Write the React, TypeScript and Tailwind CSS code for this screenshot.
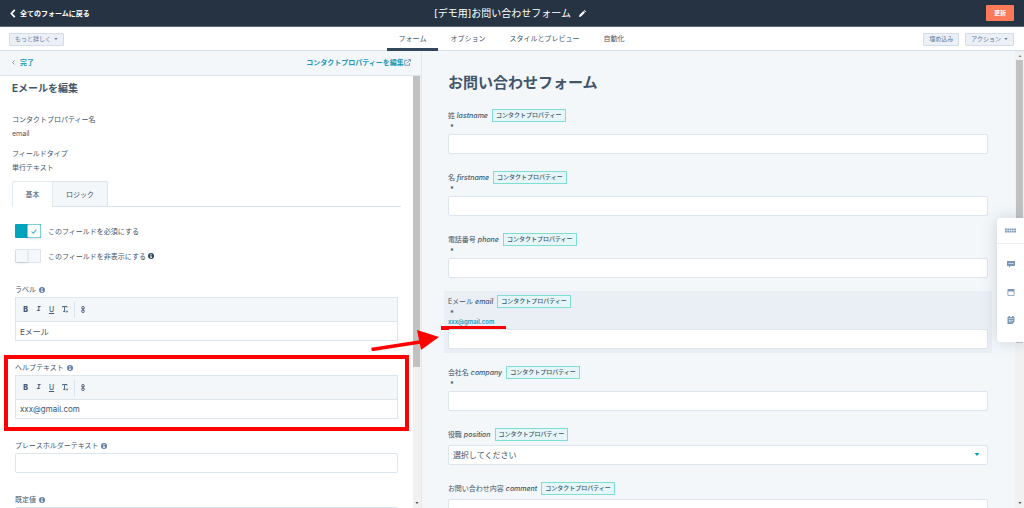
import type { ReactNode } from "react";

function InfoIcon({ className = "" }: { className?: string }) {
  return (
    <svg viewBox="0 0 12 12" className={`size-[6px] shrink-0 ${className}`} aria-hidden="true">
      <circle cx="6" cy="6" r="6" fill="currentColor" />
      <path d="M5 2h2v2H5zM4.400 5H7v3.600h.8V10H4.300V8.600H5V6.300h-.6z" fill="#fff" />
    </svg>
  );
}

function Caret({ className = "" }: { className?: string }) {
  return (
    <svg viewBox="0 0 8 5" className={className} aria-hidden="true">
      <path d="M0 0h8L4 5z" fill="currentColor" />
    </svg>
  );
}

function Chevron({ className = "" }: { className?: string }) {
  return (
    <svg viewBox="0 0 6 10" className={className} fill="none" stroke="currentColor" strokeWidth="2" aria-hidden="true">
      <path d="M5 1 1.200 5 5 9" />
    </svg>
  );
}

function SmallButton({ children }: { children: ReactNode }) {
  return (
    <button
      type="button"
      className="flex h-[13px] items-center gap-[3px] rounded-[1px] border border-[#d3deea] bg-[#eaf0f6] px-[5px] text-[6px] leading-none text-[#63799a]"
    >
      {children}
    </button>
  );
}

const tabs = ["フォーム", "オプション", "スタイルとプレビュー", "自動化"];

function Header() {
  return (
    <header className="grid h-[27px] shrink-0 grid-cols-[1fr_auto_1fr] items-center border-b border-[#5b6b7b] bg-[#253342] px-[10px] text-white">
      <a href="#forms" className="flex items-center gap-[4px] text-[7px] font-bold leading-none">
        <Chevron className="h-[9px] w-[6px]" />
        全てのフォームに戻る
      </a>
      <div className="flex items-center gap-[8px] pr-[4px]">
        <h1 className="text-[10px] leading-none">[デモ用]お問い合わせフォーム</h1>
        <button type="button" aria-label="名前を編集">
          <svg viewBox="0 0 12 12" className="size-[7px]" fill="currentColor" aria-hidden="true">
            <path d="M8.200 1.100 9.300 0 12 2.700l-1.100 1.100zM7.400 1.900l2.700 2.700L3.400 11.300 0 12l.7-3.400z" />
          </svg>
        </button>
      </div>
      <button
        type="button"
        className="flex h-[16px] w-[28px] items-center justify-center justify-self-end rounded-[1px] bg-[#ff7a59] text-[6px] font-bold leading-none"
      >
        更新
      </button>
    </header>
  );
}

function NavBar() {
  return (
    <div className="grid h-[24px] shrink-0 grid-cols-[1fr_auto_1fr] items-center border-b border-[#d3e0eb] bg-white pr-[10px] pl-[9px]">
      <div className="flex">
        <SmallButton>
          もっと詳しく
          <Caret className="h-[2px] w-[4px]" />
        </SmallButton>
      </div>
      <nav className="flex h-[24px]">
        {tabs.map((tab, i) => (
          <a
            key={tab}
            href={`#tab-${i}`}
            className={`flex items-center border-b-[3px] px-[12px] pt-[2px] text-[7px] leading-none ${
              i === 0 ? "border-[#33475b]" : "border-transparent"
            }`}
          >
            {tab}
          </a>
        ))}
      </nav>
      <div className="flex justify-end gap-[6px]">
        <SmallButton>埋め込み</SmallButton>
        <SmallButton>
          アクション
          <Caret className="h-[2px] w-[4px]" />
        </SmallButton>
      </div>
    </div>
  );
}

function Toggle({ id, checked, label, info }: { id: string; checked?: boolean; label: string; info?: boolean }) {
  return (
    <label htmlFor={id} className="relative ml-[3px] flex h-[14px] items-center text-[7px] leading-none">
      <input id={id} type="checkbox" defaultChecked={checked} className="peer sr-only" />
      {checked ? (
        <span className="flex h-[14px] w-[26px] justify-end rounded-[1px] bg-[#00a4bd]">
          <span className="flex w-[14px] items-center justify-center rounded-[2px] border border-[#7fd1de] bg-white shadow-sm">
            <svg viewBox="0 0 10 8" className="h-[5px] w-[6px]" fill="none" stroke="#33b6ca" strokeWidth="1.800" aria-hidden="true">
              <path d="m1 4 2.800 3L9 1" />
            </svg>
          </span>
        </span>
      ) : (
        <span className="flex h-[14px] w-[26px] rounded-[1px] border border-[#dfe6ee] bg-[#f5f8fa]">
          <span className="w-[12px] rounded-[1px] border-r border-[#dfe6ee] bg-[#f5f8fa] shadow-sm" />
        </span>
      )}
      <span className="ml-[7px]">{label}</span>
      {info && <InfoIcon className="ml-[2px] text-[#33475b]" />}
    </label>
  );
}

function Toolbar() {
  const btn = "flex w-[13px] items-center justify-center text-[7px] leading-none text-[#425b76]";
  return (
    <div className="flex h-[24px] items-center border-b border-[#dde5ed] bg-[#f3f7fa] pl-[3px]">
      <button type="button" aria-label="太字" className={`${btn} font-black`}>B</button>
      <button type="button" aria-label="斜体" className={`${btn} font-['Liberation_Mono',monospace] font-bold italic`}>I</button>
      <button type="button" aria-label="下線" className={`${btn} font-medium underline`}>U</button>
      <button type="button" aria-label="書式をクリア" className={btn}>
        <svg viewBox="0 0 12 14" className="h-[7px] w-[6px]" fill="none" stroke="currentColor" strokeWidth="1.800" aria-hidden="true">
          <path d="M1 3V1h9v2M5.500 1 4.500 11M2.500 11h4M8 9l4 4M12 9l-4 4" />
        </svg>
      </button>
      <span className="mr-[1px] ml-[3px] h-[16px] w-px bg-[#dbe3eb]" />
      <button type="button" aria-label="リンク" className={btn}>
        <svg viewBox="0 0 8 14" className="h-[7px] w-[4px]" fill="none" stroke="currentColor" strokeWidth="1.800" aria-hidden="true">
          <path d="M1.500 5V2.500Q1.500 1 4 1t2.500 1.500V5Q6.500 6 4 6T1.500 5zM1.500 9v2.500Q1.500 13 4 13t2.500-1.500V9Q6.500 8 4 8T1.500 9zM4 4v6" />
        </svg>
      </button>
    </div>
  );
}

function FieldLabel({ id, children }: { id: string; children: ReactNode }) {
  return (
    <label htmlFor={id} className="flex h-[15px] items-center gap-[3px] text-[7px] leading-none">
      {children}
      <InfoIcon className="text-[#6583a8]" />
    </label>
  );
}

function RichField({ id, label, value }: { id: string; label: string; value: string }) {
  return (
    <>
      <FieldLabel id={id}>{label}</FieldLabel>
      <div className="h-[44px] border border-[#dde5ed] bg-white">
        <Toolbar />
        <input id={id} defaultValue={value} className="block h-[18px] w-full px-[4px] text-[8px] outline-none" />
      </div>
    </>
  );
}

function EditorPanel() {
  return (
    <section className="flex w-[41.2%] shrink-0 flex-col border-r border-[#e3e9f0] bg-white">
      <div className="flex h-[25px] shrink-0 items-center justify-between border-b border-[#dbe5ee] bg-[#f3f7fa] pr-[10px] pl-[12px] pb-[2px] text-[7px] font-bold leading-none text-[#2499b3]">
        <a href="#done" className="flex items-center gap-[5px]">
          <Chevron className="h-[5px] w-[3px] text-[#7c98b6]" />
          完了
        </a>
        <a href="#property" className="flex items-center">
          コンタクトプロパティーを編集
          <svg viewBox="0 0 14 14" className="size-[7px] text-[#6583a8]" fill="none" stroke="currentColor" strokeWidth="1.600" aria-hidden="true">
            <path d="M7 2.500H1.500v10h9.500V8M5.500 8.500 12.500 1.500M8.500 1H13v4.500" />
          </svg>
        </a>
      </div>
      <div className="flex min-h-0 flex-1">
        <div className="min-w-0 flex-1 overflow-hidden pt-[6px] pr-[12px] pl-[12px]">
          <h2 className="text-[10px] font-bold leading-[12px]">Eメールを編集</h2>
          <dl className="mt-[19px] text-[7px] leading-[14px]">
            <dt>コンタクトプロパティー名</dt>
            <dd>email</dd>
            <dt className="mt-[6px]">フィールドタイプ</dt>
            <dd>単行テキスト</dd>
          </dl>
          <div role="tablist" className="mt-[6px] flex h-[26px] border-b border-[#dbe3ec] text-[7px] leading-none">
            <button type="button" role="tab" aria-selected="true" className="-mb-px w-[41px] rounded-tl-[2px] border border-b-0 border-[#e3e9f0] bg-white">
              基本
            </button>
            <button type="button" role="tab" aria-selected="false" className="w-[55px] rounded-tr-[2px] border-t border-r border-[#dbe3ec] bg-[#f3f7fa]">
              ロジック
            </button>
          </div>
          <div className="mt-[17px] flex flex-col gap-[11px]">
            <Toggle id="required" checked label="このフィールドを必須にする" />
            <Toggle id="hidden" label="このフィールドを非表示にする" info />
          </div>
          <div className="mt-[19px] mr-[3px] ml-[3px] flex flex-col gap-[19px]">
            <div>
              <RichField id="label" label="ラベル" value="Eメール" />
            </div>
            <div className="relative">
              <RichField id="help" label="ヘルプテキスト" value="xxx@gmail.com" />
              <div className="pointer-events-none absolute -inset-x-[11px] -top-[5px] -bottom-[12px] border-4 border-[#fe0000]" />
            </div>
            <div>
              <FieldLabel id="placeholder">プレースホルダーテキスト</FieldLabel>
              <input id="placeholder" className="block h-[20px] w-full rounded-[2px] border border-[#dde5ed] px-[4px] text-[8px]" />
            </div>
            <div>
              <FieldLabel id="default">既定値</FieldLabel>
              <input id="default" className="block h-[20px] w-full rounded-[2px] border border-[#dde5ed] px-[4px] text-[8px]" />
            </div>
          </div>
        </div>
        <div className="flex w-[8px] shrink-0 flex-col items-center justify-between bg-[#f1f1f1] pb-[4px]">
          <div className="h-[68%] w-[7px] bg-[#c1c1c1]" />
          <Caret className="h-[2px] w-[4px] text-[#505050]" />
        </div>
      </div>
    </section>
  );
}

type Field = { label: string; name: string; required?: boolean; help?: string; options?: string[] };

const fields: Field[] = [
  { label: "姓", name: "lastname", required: true },
  { label: "名", name: "firstname", required: true },
  { label: "電話番号", name: "phone", required: true },
  { label: "Eメール", name: "email", required: true, help: "xxx@gmail.com" },
  { label: "会社名", name: "company", required: true },
  { label: "役職", name: "position", options: ["選択してください"] },
  { label: "お問い合わせ内容", name: "comment" },
];

function PreviewField({ field }: { field: Field }) {
  const control = "block h-[20px] w-full rounded-[2px] border border-[#dde5ee] bg-white px-[4px] text-[8px]";
  return (
    <div className={`mb-[9px] p-[4px] ${field.help ? "bg-[#eaeff6]" : ""}`}>
      <div className="flex h-[13px] items-center text-[7px] leading-none">
        <label htmlFor={field.name} className="whitespace-pre">
          {field.label} <em className="font-medium">{field.name}</em>
        </label>
        <span className="ml-[4px] flex h-[13px] items-center border border-[#7fded2] bg-[#e5f5f8] px-[3px] pb-[1px] text-[6px] font-medium">
          コンタクトプロパティー
        </span>
      </div>
      {field.required && <div className="h-[8px] pl-[2px] text-[7px] font-bold leading-[11px]">*</div>}
      {field.help && (
        <div className="relative h-[9px] text-[6px] font-semibold leading-[12px] text-[#2499b3]">
          {field.help}
          <div className="absolute top-[10px] -left-[7px] h-[4px] w-[65px] bg-[#fe0000]" />
        </div>
      )}
      <div className="relative mt-[4px]">
        {field.options ? (
          <>
            <select id={field.name} className={`${control} appearance-none`}>
              {field.options.map((option) => (
                <option key={option}>{option}</option>
              ))}
            </select>
            <Caret className="pointer-events-none absolute top-[8px] right-[8px] h-[3px] w-[6px] text-[#00a4bd]" />
          </>
        ) : (
          <input id={field.name} className={control} />
        )}
      </div>
    </div>
  );
}

function SideWidget() {
  const btn = "flex h-[28px] w-full items-center justify-center text-[#7c98b6]";
  return (
    <aside className="absolute top-[167px] right-0 flex h-[124px] w-[27px] flex-col rounded-l-[4px] bg-white shadow-[0_0_16px_rgba(51,71,91,0.2)]">
      <button type="button" aria-label="移動" className="flex h-[26px] items-center justify-center border-b border-[#edf0f3] text-[#7c98b6]">
        <svg viewBox="0 0 22 10" className="h-[5px] w-[11px]" fill="currentColor" aria-hidden="true">
          <path d="M0 1h3.600v3.600H0zM4.600 1h3.600v3.600H4.600zM9.200 1h3.600v3.600H9.200zM13.800 1h3.600v3.600h-3.600zM18.400 1H22v3.600h-3.600zM0 5.600h3.600v3.600H0zM4.600 5.600h3.600v3.600H4.600zM9.200 5.600h3.600v3.600H9.200zM13.800 5.600h3.600v3.600h-3.600zM18.400 5.600H22v3.600h-3.600z" />
        </svg>
      </button>
      <div className="flex flex-col pt-[6px]">
        <button type="button" aria-label="チャット" className={btn}>
          <svg viewBox="0 0 16 14" className="h-[7px] w-[8px]" aria-hidden="true">
            <path d="M0 0h16v10H7l-3 4v-4H0z" fill="currentColor" />
            <path d="M3.500 4h2v2h-2zM7 4h2v2H7zM10.500 4h2v2h-2z" fill="#fff" />
          </svg>
        </button>
        <button type="button" aria-label="ウィンドウ" className={btn}>
          <svg viewBox="0 0 16 14" className="h-[7px] w-[8px]" aria-hidden="true">
            <rect x="1" width="14" height="14" rx="2" fill="currentColor" />
            <path d="M2.500 5h11v7.500h-11z" fill="#fff" />
          </svg>
        </button>
        <button type="button" aria-label="カレンダー" className={btn}>
          <svg viewBox="0 0 16 16" className="size-[8px]" aria-hidden="true">
            <path d="M3 0h3v2h4V0h3v2h2v9l-4 5H1V2h2z" fill="currentColor" />
            <path d="M3 5h10v1H3zM4 8h2v1.500H4zM7 8h2v1.500H7zM10 8h2v1.500h-2zM4 11h2v1.500H4zM7 11h2v1.500H7z" fill="#fff" />
          </svg>
        </button>
      </div>
    </aside>
  );
}

function Preview() {
  return (
    <main className="relative flex min-w-0 flex-1 bg-[#f3f7fa]">
      <div className="min-w-0 flex-1 overflow-hidden pt-[22px] pr-[23px] pl-[22px]">
        <h2 className="mb-[12px] ml-[4px] text-[15px] font-bold leading-[20px]">お問い合わせフォーム</h2>
        {fields.map((field) => (
          <PreviewField key={field.name} field={field} />
        ))}
      </div>
      <div className="flex w-[9px] shrink-0 flex-col items-center bg-[#f1f1f1] pt-[4px] pb-[4px]">
        <Caret className="h-[2px] w-[4px] shrink-0 rotate-180 text-[#8a8a8a]" />
        <div className="mt-[3px] h-[63%] w-[7px] bg-[#c1c1c1]" />
        <Caret className="mt-auto h-[2px] w-[4px] shrink-0 text-[#505050]" />
      </div>
      <SideWidget />
    </main>
  );
}

export default function App() {
  return (
    <div
      lang="ja"
      className="relative flex h-screen flex-col overflow-hidden bg-white font-['Inter','Noto_Sans_CJK_JP',sans-serif] text-[#42566b]"
    >
      <Header />
      <NavBar />
      <div className="flex min-h-0 flex-1">
        <EditorPanel />
        <Preview />
      </div>
      <svg viewBox="0 0 70 22" className="pointer-events-none absolute top-[329px] left-[370px] h-[22px] w-[70px]" aria-hidden="true">
        <path d="M1.500 20.500 50 13" stroke="#fe0000" strokeWidth="3.600" />
        <path d="M47 1 69 8 51 21z" fill="#fe0000" />
      </svg>
    </div>
  );
}
